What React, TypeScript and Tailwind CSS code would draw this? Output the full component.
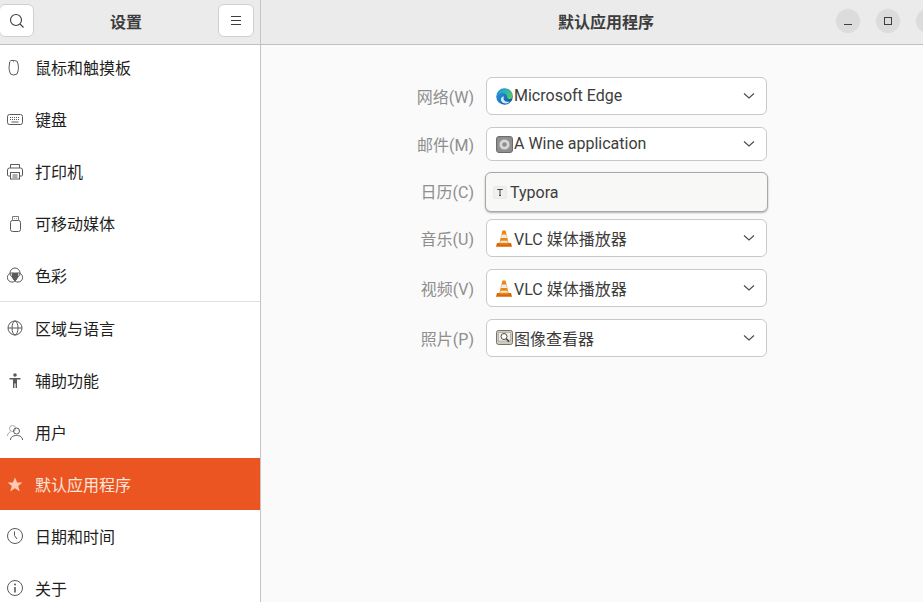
import React from "react";

const Ico = ({ children }: { children: React.ReactNode }) => (
  <svg width="18" height="18" viewBox="0 0 18 18" fill="none" stroke="currentColor" strokeWidth="1" className="shrink-0">
    {children}
  </svg>
);

const MouseI = () => (
  <Ico>
    <path d="M5 1.500h3.500a3.500 3.500 0 0 1 3.500 3.500c.6 3 .6 5 0 7a4 4 0 0 1-4 4h-.5a4 4 0 0 1-4-4c-.6-2-.6-4 0-7a3 3 0 0 1 1.500-3.500Z" transform="translate(-1 0)" />
    <path d="M6.500 1.500v2" strokeOpacity=".5" />
  </Ico>
);
const KeyboardI = () => (
  <Ico>
    <rect x="0.500" y="3.500" width="15" height="10" rx="2" />
    <path d="M3 6.500h10M3 8.500h10" strokeDasharray="1 1" />
    <path d="M4.500 11h7" />
  </Ico>
);
const PrinterI = () => (
  <Ico>
    <path d="M3.500 5V1.500h9V5M3.500 13H1.500a1 1 0 0 1-1-1V7a2 2 0 0 1 2-2h11a2 2 0 0 1 2 2v5a1 1 0 0 1-1 1h-2" />
    <rect x="3.500" y="9.500" width="9" height="6.500" />
    <path d="M5.500 12h5M5.500 14h5" />
  </Ico>
);
const UsbI = () => (
  <Ico>
    <path d="M5.500 5V1.500h6V5" strokeOpacity=".8" />
    <path d="M7.500 3.500h.5M9.500 3.500h.5" />
    <rect x="3.500" y="5.500" width="10" height="11" rx="2" />
  </Ico>
);
const ColorI = () => (
  <Ico>
    <circle cx="8" cy="6" r="5" />
    <circle cx="5" cy="10.500" r="4.600" />
    <circle cx="11" cy="10.500" r="4.600" />
    <path d="M4.800 6.500C6.500 5.300 9.500 5.300 11.200 6.500L11.300 10C10.500 12 9.300 13 8 14.200 6.600 13 5.500 12 4.700 10Z" fill="currentColor" stroke="none" />
  </Ico>
);
const GlobeI = () => (
  <Ico>
    <circle cx="8" cy="8" r="7" />
    <ellipse cx="8" cy="8" rx="3" ry="7" />
    <path d="M1 8h14" />
  </Ico>
);
const AccessI = () => (
  <Ico>
    <circle cx="8" cy="3" r="1.800" fill="currentColor" stroke="none" />
    <path d="M2.500 6h11v1.500H10V16H8.600v-4.500H7.400V16H6V7.500H2.500Z" fill="currentColor" stroke="none" />
  </Ico>
);
const UserI = () => (
  <Ico>
    <circle cx="9.500" cy="7" r="3" />
    <path d="M3.500 16c0-3 2.500-4.500 6-4.500s6 1.500 6 4.500" />
    <circle cx="5.500" cy="4.500" r="3" strokeOpacity=".5" />
    <path d="M0.500 12c0-2.500 1.500-3.500 3-4" strokeOpacity=".5" />
  </Ico>
);
const StarI = () => (
  <svg width="18" height="18" viewBox="0 0 18 18" className="shrink-0">
    <path d="M8 1.500l2.100 5h5.400l-4.300 3.400 1.600 5.500L8 12.200l-4.800 3.200 1.600-5.500L.5 6.500h5.400Z" fill="#ffc9b5" />
  </svg>
);
const ClockI = () => (
  <Ico>
    <circle cx="8" cy="8" r="7.500" />
    <path d="M7.500 3.500V7.500L10 11" />
  </Ico>
);
const InfoI = () => (
  <Ico>
    <circle cx="8" cy="8" r="7.500" />
    <circle cx="8" cy="4.500" r="1" fill="currentColor" stroke="none" />
    <path d="M8 7v5.500" strokeWidth="1.600" />
  </Ico>
);

const items: { t: string; i: React.ReactNode; sel?: boolean; sep?: boolean; low?: boolean }[] = [
  { t: "鼠标和触摸板", i: <MouseI /> },
  { t: "键盘", i: <KeyboardI /> },
  { t: "打印机", i: <PrinterI /> },
  { t: "可移动媒体", i: <UsbI /> },
  { t: "色彩", i: <ColorI />, sep: true },
  { t: "区域与语言", i: <GlobeI />, low: true },
  { t: "辅助功能", i: <AccessI />, low: true },
  { t: "用户", i: <UserI />, low: true },
  { t: "默认应用程序", i: <StarI />, sel: true, low: true },
  { t: "日期和时间", i: <ClockI />, low: true },
  { t: "关于", i: <InfoI />, low: true },
];

const EdgeI = () => (
  <svg width="17" height="17" viewBox="0 0 17 17" className="shrink-0">
    <defs>
      <linearGradient id="e1" x1="0" y1="0" x2="1" y2="1">
        <stop offset="0" stopColor="#2aa5e8" />
        <stop offset="1" stopColor="#0a4f9e" />
      </linearGradient>
      <linearGradient id="e2" x1="0" y1="0" x2="1" y2="1">
        <stop offset="0" stopColor="#1b9de2" />
        <stop offset="1" stopColor="#5fd24e" />
      </linearGradient>
    </defs>
    <circle cx="8.500" cy="8.500" r="8.300" fill="url(#e1)" />
    <path d="M2 6C4 .5 12-.8 15.300 3.500c2 2.600 1.800 7-.8 7.500-2.200.3-3.500-.5-3.300-2C11.500 6 7 3.500 2 6Z" fill="url(#e2)" />
    <path d="M8 8.500c-1.500 3 .8 5.800 4.500 5.300 1 0 1.500-.1 2-.5-3 3.500-8.500 2.800-9.500-1C4.500 9.500 6.500 8 8 8.500Z" fill="#e8f6fb" opacity=".9" />
  </svg>
);
const WineI = () => (
  <svg width="17" height="17" viewBox="0 0 17 17" className="shrink-0">
    <rect x="0.500" y="0.500" width="16" height="16" rx="2.500" fill="#8f8f8f" stroke="#6b6b6b" />
    <circle cx="8.500" cy="8.500" r="5.300" fill="#d8d8d8" stroke="#9c9c9c" strokeDasharray="2 1" />
    <circle cx="8.500" cy="8.500" r="2.300" fill="#8f8f8f" />
  </svg>
);
const TyporaI = () => (
  <svg width="14" height="13" viewBox="0 0 14 13" className="shrink-0">
    <rect x="0.500" y="0.500" width="13" height="12" rx="2" fill="#f1f0ee" stroke="#e9e8e5" />
    <path d="M4.500 4V3.500h5V4M7 3.500v6M6 9.500h2" fill="none" stroke="#444" strokeWidth="1" />
  </svg>
);
const VlcI = () => (
  <svg width="16" height="17" viewBox="0 0 16 17" className="shrink-0">
    <path d="M1 13h14l1 3.700H0Z" fill="#d9650a" />
    <path d="M6.400 0.500h3.200L13 14.500H3Z" fill="#ee8512" />
    <path d="M5.700 4.600h4.600l.8 3.400H4.900Z" fill="#ecebe8" />
    <path d="M4.500 10.800h7l.4 1.900H4.100Z" fill="#ecebe8" />
  </svg>
);
const ViewerI = () => (
  <svg width="17" height="16" viewBox="0 0 17 16" className="shrink-0">
    <rect x="0.500" y="0.500" width="16" height="14" rx="2" fill="#cfcbc1" stroke="#77736a" />
    <rect x="2.500" y="2.500" width="12" height="8.500" fill="#efeee8" stroke="#a09c92" strokeWidth=".6" />
    <circle cx="8" cy="6.500" r="3" fill="#fff" stroke="#4d4d4d" />
    <path d="M10.300 8.800l2.800 2.800" stroke="#3e3e3e" strokeWidth="1.500" />
  </svg>
);

const Chevron = () => (
  <svg width="12" height="8" viewBox="0 0 12 8" fill="none" stroke="#4a4a4a" strokeWidth="1.100" className="shrink-0">
    <path d="M1 1.500l5 4.500 5-4.500" />
  </svg>
);

const rows = [
  { l: "网络(W)", i: <EdgeI />, t: "Microsoft Edge", cls: "h-[38px] mb-[12px]", tc: "" },
  { l: "邮件(M)", i: <WineI />, t: "A Wine application", cls: "h-[34px] mb-[11px]", tc: "" },
  { l: "音乐(U)", i: <VlcI />, t: "VLC 媒体播放器", cls: "h-[38px] mb-[12px]", tc: "mt-[4px]" },
  { l: "视频(V)", i: <VlcI />, t: "VLC 媒体播放器", cls: "h-[38px] mb-[12px]", tc: "mt-[4px]" },
  { l: "照片(P)", i: <ViewerI />, t: "图像查看器", cls: "h-[38px] mb-[12px]", tc: "mt-[4px]" },
];

const Row = ({ l, i, t, cls, tc }: { l: string; i: React.ReactNode; t: string; cls: string; tc: string }) => (
  <div className={`flex items-center ${cls}`}>
    <div className="w-[74px] mr-[12px] mt-[3px] text-right text-[16px] text-[#8e8e8e] whitespace-nowrap">{l}</div>
    <div className="w-[281px] h-full flex items-center pl-[9px] pr-[11px] bg-white border border-[#c9c9c9] rounded-[6px] text-[#3d3d3d] text-[16px]">
      <span className="w-[18px] shrink-0 flex items-center">{i}</span>
      <span className={`flex-1 whitespace-nowrap ${tc}`}>{t}</span>
      <Chevron />
    </div>
  </div>
);

export default function App() {
  return (
    <div
      className="w-[923px] h-[602px] flex overflow-hidden bg-[#fafafa] text-[#1f1f1f]"
      style={{ fontFamily: 'Roboto, "Noto Sans CJK SC", sans-serif' }}
    >
      <aside className="w-[261px] shrink-0 flex flex-col border-r border-[#c4c4c4] bg-white">
        <header className="h-[45px] shrink-0 flex items-center justify-between bg-[#ebebeb] border-b border-[#c0c0c0] pl-0 pr-[6px] relative">
          <button className="w-[35px] h-[33px] -ml-[1px] -mt-[3px] flex items-center justify-center bg-white border border-[#d0d0d0] rounded-[6px] text-[#3d3d3d]">
            <svg width="16" height="16" viewBox="0 0 16 16" fill="none" stroke="currentColor" strokeWidth="1.100">
              <circle cx="7" cy="7" r="5.500" />
              <path d="M11 11l3.500 3.500" />
            </svg>
          </button>
          <span className="text-[16px] font-bold text-[#3d3d3d] mt-[1px]">设置</span>
          <button className="w-[36px] h-[33px] -mt-[3px] flex items-center justify-center bg-white border border-[#d0d0d0] rounded-[6px] text-[#3d3d3d]">
            <svg width="12" height="12" viewBox="0 0 12 12" fill="none" stroke="currentColor" strokeWidth="1">
              <path d="M1 1.500h10M1 5.500h10M1 9.500h10" />
            </svg>
          </button>
        </header>
        <nav className="flex-1 overflow-hidden">
          <div className="-mt-[3px]">
            {items.map((it) => (
              <div
                key={it.t}
                className={`h-[52px] flex items-center pl-[7px] text-[16px] ${it.low ? "pt-[2px]" : ""} ${
                  it.sel ? "bg-[#eb5521] text-[#ffe6dc]" : "text-[#1f1f1f]"
                } ${it.sep ? "border-b border-[#e0e0e0]" : ""}`}
              >
                <span className={`w-[28px] flex items-center ${it.sel ? "" : "text-[#5a5a5a]"}`}>{it.i}</span>
                <span className="whitespace-nowrap mt-[2px]">{it.t}</span>
              </div>
            ))}
          </div>
        </nav>
      </aside>
      <section className="flex-1 min-w-0 flex flex-col">
        <header className="h-[45px] shrink-0 flex items-center bg-[#ebebeb] border-b border-[#c0c0c0] pl-[297px]">
          <span className="text-[16px] font-bold text-[#3d3d3d] mt-[1px] whitespace-nowrap">默认应用程序</span>
          <div className="flex gap-[16px] ml-[182px] -mt-[3px] shrink-0">
            <span className="w-[24px] h-[24px] rounded-full bg-[#dcdcdc] flex items-center justify-center shrink-0">
              <svg width="10" height="10" viewBox="0 0 10 10" fill="none" stroke="#3d3d3d"><path d="M1 8.500h8" /></svg>
            </span>
            <span className="w-[24px] h-[24px] rounded-full bg-[#dcdcdc] flex items-center justify-center shrink-0">
              <svg width="10" height="10" viewBox="0 0 10 10" fill="none" stroke="#3d3d3d"><rect x="1.500" y="1.500" width="7" height="7" /></svg>
            </span>
            <span className="w-[24px] h-[24px] rounded-full bg-[#dcdcdc] shrink-0" />
          </div>
        </header>
        <main className="flex-1 pt-[32px] pl-[139px] overflow-hidden">
          <Row {...rows[0]} />
          <Row {...rows[1]} />
          <div className="flex items-center h-[40px] mb-[7px]">
            <div className="w-[74px] mr-[11px] mt-[1px] text-right text-[16px] text-[#8e8e8e] whitespace-nowrap">日历(C)</div>
            <div className="w-[283px] h-full flex items-center pl-[7px] bg-[#f8f8f7] border border-[#a8a8a8] rounded-[6px] shadow-[0_1px_2px_rgba(0,0,0,0.3)] text-[#3d3d3d] text-[16px]">
              <span className="w-[17px] shrink-0 flex items-center"><TyporaI /></span>
              <span className="whitespace-nowrap mt-[1px]">Typora</span>
            </div>
          </div>
          <Row {...rows[2]} />
          <Row {...rows[3]} />
          <Row {...rows[4]} />
        </main>
      </section>
    </div>
  );
}
